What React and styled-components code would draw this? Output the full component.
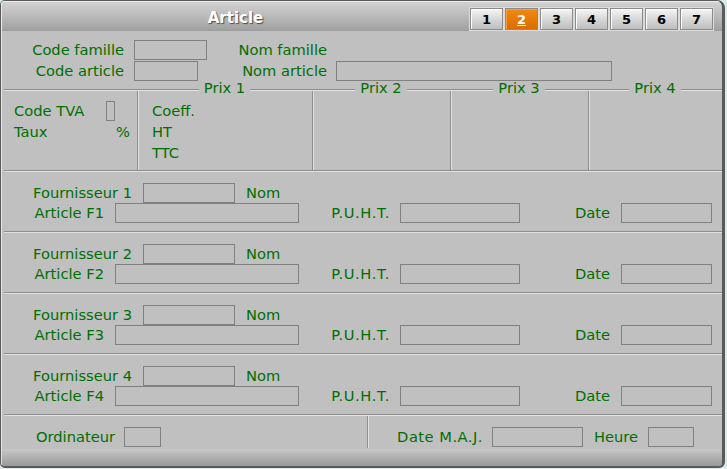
import React from "react";
import styled, { createGlobalStyle } from "styled-components";

const Global = createGlobalStyle`
  html, body {
    margin: 0;
    padding: 0;
    background: #d8ecea;
  }
  body {
    font-family: "DejaVu Sans", Verdana, sans-serif;
  }
`;

const Fenetre = styled.div`
  box-sizing: border-box;
  width: 725px;
  height: 468px;
  display: flex;
  flex-direction: column;
  border: 1px solid #5a5a5a;
  border-right-width: 3px;
  border-bottom-width: 2px;
  border-radius: 5px 8px 6px 5px;
  overflow: hidden;
  background: #c0c0c0;
`;

const BarreTitre = styled.div`
  flex: none;
  height: 30px;
  display: flex;
  align-items: flex-start;
  background: linear-gradient(#d4d4d4, #a8a8a8 85%, #9e9e9e);
  box-shadow: inset 1px 1px 0 #ececec;
`;

const Titre = styled.h1`
  flex: 1;
  margin: 0;
  padding-top: 2px;
  text-align: center;
  font: bold 15px/30px "DejaVu Sans", Verdana, sans-serif;
  color: #fff;
  text-shadow: 1px 1px 1px #4a4a4a;
`;

const Onglets = styled.div`
  display: flex;
  gap: 2px;
  margin-top: 7px;
  padding-right: 9px;
`;

const Onglet = styled.button`
  box-sizing: border-box;
  width: 33px;
  height: 22px;
  padding: 0;
  border: 1px solid #8a8a8a;
  outline: 1px solid #dcdcdc;
  background: ${(p) =>
    p.$actif
      ? "linear-gradient(#f28a12, #dc6c00)"
      : "linear-gradient(#f6f6f6, #d2d2d2 60%, #bebebe)"};
  color: ${(p) => (p.$actif ? "#fff" : "#000")};
  font: bold 13px "DejaVu Sans", Verdana, sans-serif;
  text-decoration: ${(p) => (p.$actif ? "underline" : "none")};
  box-shadow: inset 1px 1px 0 ${(p) => (p.$actif ? "#f8a040" : "#ffffff")};
`;

const Corps = styled.div`
  flex: 1;
  display: flex;
  flex-direction: column;
  padding-left: 3px;
  box-shadow: inset 1px 0 0 #e6e6e6;
  color: #006e00;
  font-size: 14.67px;
`;

const Identite = styled.div`
  flex: none;
  height: 50px;
  box-sizing: border-box;
  padding-top: 9px;
  display: flex;
  flex-direction: column;
  gap: 1px;
`;

const Ligne = styled.div`
  display: flex;
  align-items: center;
  height: ${(p) => p.$h || 20}px;
  justify-content: ${(p) => (p.$ecarte ? "space-between" : "flex-start")};
`;

const Libelle = styled.span`
  flex: none;
  width: ${(p) => (p.$w ? `${p.$w}px` : "auto")};
  margin-right: ${(p) => p.$mr || 0}px;
  margin-left: ${(p) => p.$ml || 0}px;
  text-align: ${(p) => (p.$gauche ? "left" : "right")};
  letter-spacing: ${(p) => (p.$ls ? `${p.$ls}px` : "normal")};
  white-space: nowrap;
  line-height: 20px;
`;

const Champ = styled.div`
  flex: none;
  box-sizing: border-box;
  width: ${(p) => p.$w}px;
  height: 20px;
  border: 1px solid #808080;
`;

const Prix = styled.div`
  flex: none;
  height: 89px;
  display: grid;
  grid-template-columns: 133px 175px 138px 138px 1fr;
`;

const Colonne = styled.div`
  display: flex;
  flex-direction: column;
`;

const Entete = styled.div`
  flex: none;
  height: 10px;
  display: flex;
  align-items: flex-end;

  &::before,
  &::after {
    content: "";
    flex: 1;
    border-top: 1px solid #8e8e8e;
    border-bottom: 1px solid #e2e2e2;
  }

  span {
    padding: 0 5px;
    line-height: 16px;
    margin-bottom: -5px;
  }
`;

const ContenuPrix = styled.div`
  flex: 1;
  padding: 9px ${(p) => p.$pr || 0}px 0 ${(p) => p.$pl || 0}px;
  border-left: ${(p) => (p.$premier ? "none" : "1px solid #8e8e8e")};
  box-shadow: ${(p) => (p.$premier ? "none" : "inset 1px 0 0 #e2e2e2")};
`;

const Section = styled.div`
  flex: none;
  border-top: 1px solid #8e8e8e;
  box-shadow: inset 0 1px 0 #e2e2e2;
  padding: 12px 0 8px;
  display: flex;
  flex-direction: column;
`;

const Pied = styled.div`
  flex: 1;
  border-top: 1px solid #8e8e8e;
  box-shadow: inset 0 1px 0 #e2e2e2;
  padding: 1px 0;
  display: grid;
  grid-template-columns: 363px 1fr;
`;

const Cellule = styled.div`
  padding-top: 11px;
  border-left: ${(p) => (p.$separe ? "1px solid #8e8e8e" : "none")};
  box-shadow: ${(p) => (p.$separe ? "inset 1px 0 0 #e2e2e2" : "none")};
`;

const BarreBas = styled.div`
  flex: none;
  height: 17px;
  background: linear-gradient(#c8c8c8, #a2a2a2 80%, #9a9a9a);
  box-shadow: inset 1px 0 0 #e0e0e0;
`;

const Fournisseur = ({ n }) => (
  <Section>
    <Ligne>
      <Libelle $w={128} $mr={11}>Fournisseur {n}</Libelle>
      <Champ $w={92} />
      <Libelle $ml={11} $gauche>Nom</Libelle>
    </Ligne>
    <Ligne>
      <Libelle $w={100} $mr={11}>Article F{n}</Libelle>
      <Champ $w={184} />
      <Libelle $w={91} $mr={10} $ls={0.6}>P.U.H.T.</Libelle>
      <Champ $w={120} />
      <Libelle $w={90} $mr={11}>Date</Libelle>
      <Champ $w={91} />
    </Ligne>
  </Section>
);

const App = () => {
  return (
    <>
      <Global />
      <Fenetre>
        <BarreTitre>
          <Titre>Article</Titre>
          <Onglets>
            {[1, 2, 3, 4, 5, 6, 7].map((n) => (
              <Onglet key={n} $actif={n === 2}>
                {n}
              </Onglet>
            ))}
          </Onglets>
        </BarreTitre>

        <Corps>
          <Identite>
            <Ligne>
              <Libelle $w={120} $mr={10}>Code famille</Libelle>
              <Champ $w={73} />
              <Libelle $w={120}>Nom famille</Libelle>
            </Ligne>
            <Ligne>
              <Libelle $w={120} $mr={10}>Code article</Libelle>
              <Champ $w={64} />
              <Libelle $w={129} $mr={9}>Nom article</Libelle>
              <Champ $w={276} />
            </Ligne>
          </Identite>

          <Prix>
            <Colonne>
              <Entete />
              <ContenuPrix $premier $pl={10} $pr={7}>
                <Ligne $h={21}>
                  <Libelle $w={92} $gauche>Code TVA</Libelle>
                  <Champ $w={9} />
                </Ligne>
                <Ligne $h={21} $ecarte>
                  <Libelle $gauche>Taux</Libelle>
                  <Libelle>%</Libelle>
                </Ligne>
              </ContenuPrix>
            </Colonne>
            <Colonne>
              <Entete>
                <span>Prix 1</span>
              </Entete>
              <ContenuPrix $pl={14}>
                <Ligne $h={21}>
                  <Libelle $gauche>Coeff.</Libelle>
                </Ligne>
                <Ligne $h={21}>
                  <Libelle $gauche>HT</Libelle>
                </Ligne>
                <Ligne $h={21}>
                  <Libelle $gauche>TTC</Libelle>
                </Ligne>
              </ContenuPrix>
            </Colonne>
            {[2, 3, 4].map((n) => (
              <Colonne key={n}>
                <Entete>
                  <span>Prix {n}</span>
                </Entete>
                <ContenuPrix />
              </Colonne>
            ))}
          </Prix>

          {[1, 2, 3, 4].map((n) => (
            <Fournisseur key={n} n={n} />
          ))}

          <Pied>
            <Cellule>
              <Ligne>
                <Libelle $w={111} $mr={9}>Ordinateur</Libelle>
                <Champ $w={37} />
              </Ligne>
            </Cellule>
            <Cellule $separe>
              <Ligne>
                <Libelle $w={115} $mr={9} $ls={0.5}>Date M.A.J.</Libelle>
                <Champ $w={91} />
                <Libelle $w={55} $mr={10}>Heure</Libelle>
                <Champ $w={46} />
              </Ligne>
            </Cellule>
          </Pied>
        </Corps>

        <BarreBas />
      </Fenetre>
    </>
  );
};

export default App;
